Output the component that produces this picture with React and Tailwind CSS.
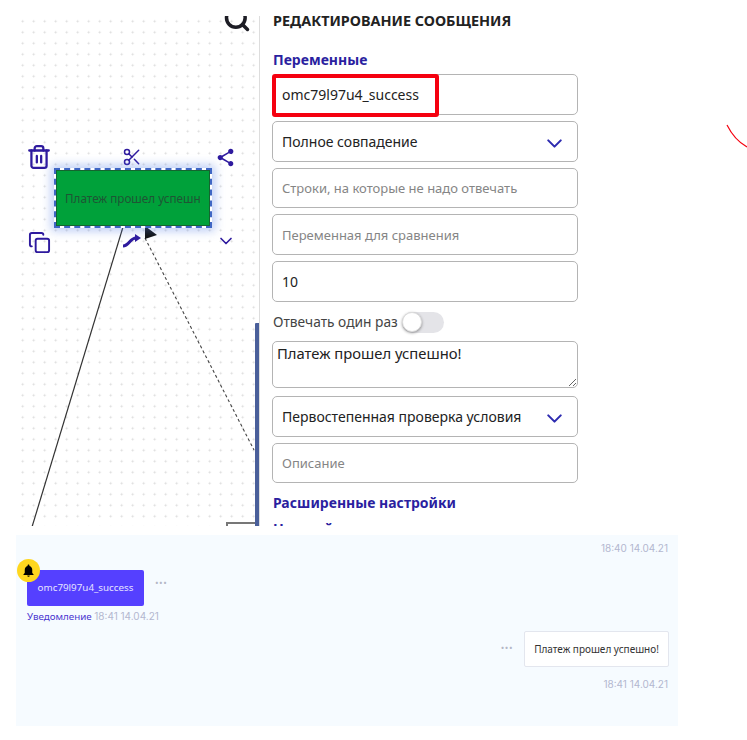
import { Trash2, Scissors, Copy, ChevronDown, Search } from "lucide-react";
import { MdShare, MdNotifications } from "react-icons/md";

const fieldClass =
  "w-full h-[40.75px] rounded-[5px] border border-[#b4b4b4] bg-white px-[9px] text-[14px] text-[#222] placeholder:text-[13px] placeholder:text-[#858585] outline-none";

function SelectField({ children }) {
  return (
    <div className={`${fieldClass} flex items-center justify-between`}>
      <span>{children}</span>
      <ChevronDown size={25} strokeWidth={2} className="mr-[1px] mt-[4px] text-[#2d2bb0]" />
    </div>
  );
}

function Canvas() {
  return (
    <div className="relative ml-4 mt-4 h-[510px] w-[244px] shrink-0 overflow-hidden border-r border-[#dddddd] bg-[radial-gradient(circle,#dadada_0.9px,transparent_1.1px)] bg-[size:11px_11px] bg-[position:1.2px_-0.2px]">
      <Search size={28} strokeWidth={3} className="absolute left-[207px] top-[-11px] text-[#1d1d25]" />

      {/* edges */}
      <svg className="absolute left-0 top-0" width="244" height="510" fill="none">
        <path d="M107 211 L16 511" stroke="#333" strokeWidth="1.2" />
        <path d="M129 222 L238 434" stroke="#444" strokeWidth="1.1" strokeDasharray="3 2.5" />
        <path d="M129 210 L141 219 L129 223 Z" fill="#111" />
      </svg>

      {/* node toolbar */}
      <Trash2 size={26} strokeWidth={2.1} className="absolute left-[10px] top-[128px] text-[#2e1a9e]" />
      <Scissors size={20} strokeWidth={1.8} className="absolute left-[106px] top-[131px] text-[#2e1a9e]" />
      <MdShare size={21} className="absolute left-[199px] top-[131px] text-[#2e1a9e]" />
      <Copy size={23} strokeWidth={2} className="absolute left-[12px] top-[215px] text-[#2e1a9e]" />
      <svg className="absolute left-[106px] top-[216px]" width="20" height="16" viewBox="0 0 20 16" fill="none">
        <path d="M1 14 C7 14 8 6 14 6" stroke="#2e1a9e" strokeWidth="3" />
        <path d="M13 2 L19 6 L13 10 Z" fill="#2e1a9e" />
      </svg>
      <ChevronDown size={20} strokeWidth={2} className="absolute left-[200px] top-[215px] text-[#2e1a9e]" />

      {/* node */}
      <div className="absolute left-[38px] top-[152px] h-[60px] w-[158px] border-2 border-dashed border-[#3f66c4] bg-white shadow-[0_0_9px_3px_rgba(90,130,230,0.4)]">
        <div className="flex h-full items-center overflow-hidden whitespace-nowrap border border-[#14652f] bg-[#00a13a] pl-[8px] pt-[2px] text-[11.7px] text-[#1f5535]">
          Платеж прошел успешн
        </div>
      </div>

      {/* neighbour nodes, cut off */}
      <div className="absolute left-[210px] top-[506px] h-[10px] w-[34px] border-2 border-[#777]" />
      <div className="absolute left-[238.5px] top-[307px] h-[203px] w-[5px] rounded-t-[1px] bg-[#4a5f9a]" />
    </div>
  );
}

function EditPanel() {
  return (
    <div className="relative ml-[12px] h-[526px] w-[306px] shrink-0 overflow-hidden pt-[12px] text-[#222]">
      <h2 className="ml-[1px] text-[14.4px] font-bold leading-[18px] text-[#222]">РЕДАКТИРОВАНИЕ СООБЩЕНИЯ</h2>
      <h3 className="ml-[1px] mt-[20px] text-[14px] font-bold leading-[20px] text-[#2b1fa0]">Переменные</h3>

      <div className="mt-[4px] flex flex-col gap-[6px]">
        <input className={fieldClass} readOnly value="omc79l97u4_success" />
        <SelectField>Полное совпадение</SelectField>
        <input className={fieldClass} readOnly placeholder="Строки, на которые не надо отвечать" />
        <input className={fieldClass} readOnly placeholder="Переменная для сравнения" />
        <input className={fieldClass} readOnly value="10" />
      </div>

      <div className="mt-[10px] flex h-[21px] items-center gap-[4px] text-[13.75px] text-[#444]">
        <span className="ml-[1px]">Отвечать один раз</span>
        <div className="flex h-[21px] w-[42px] items-center rounded-full bg-[#e4e4e8]">
          <div className="h-[20px] w-[20px] rounded-full border border-[#ddd] bg-white shadow-[0_1px_3px_rgba(0,0,0,0.4)]" />
        </div>
      </div>

      <textarea
        readOnly
        className="mt-[8px] block h-[47px] w-full rounded-[5px] border border-[#b4b4b4] px-[4px] py-0 text-[14.8px] leading-[22px] text-[#222] outline-none"
        value="Платеж прошел успешно!"
      />

      <div className="mt-[8px] flex flex-col gap-[6px]">
        <SelectField>Первостепенная проверка условия</SelectField>
        <input className={fieldClass} readOnly placeholder="Описание" />
      </div>

      <h3 className="ml-[1px] mt-[10px] text-[14px] font-bold leading-[20px] text-[#2b1fa0]">Расширенные настройки</h3>
      <h3 className="ml-[1px] mt-[6px] text-[14px] font-bold leading-[20px] text-[#2b1fa0]">Настройки кнопок</h3>

      {/* red marker from the annotated screenshot */}
      <div className="absolute left-0 top-[74px] h-[43px] w-[167px] rounded-[3px] border-[4px] border-[#f5000f]" />
    </div>
  );
}

function Chat() {
  const muted = "font-['Inter',sans-serif] text-[10px] text-[#b3b7cf]";
  const dots = "text-[9.5px] leading-[16px] tracking-[0.5px] text-[#b4b7c6]";
  return (
    <div className="ml-4 mt-[9px] h-[191px] w-[662px] bg-[#f6fbff] px-[9px] pt-[7px] text-[9.8px]">
      <p className={`pr-[1px] text-right leading-[12px] ${muted}`}>18:40 14.04.21</p>

      <div className="ml-[2px] mt-[16px] flex items-start">
        <div className="relative flex h-[36px] w-[117px] items-center justify-center rounded-[2px] bg-[#5540ff] pt-[1px] text-[#e6e3ff]">
          omc79l97u4_success
          <div className="absolute left-[-10px] top-[-11px] flex h-[23px] w-[23px] items-center justify-center rounded-full bg-[#ffd71f]">
            <MdNotifications size={15} className="text-black" />
          </div>
        </div>
        <span className={`ml-[11px] mt-[5px] ${dots}`}>•••</span>
      </div>
      <p className="ml-[2px] mt-[3px] leading-[14px]">
        <span className="text-[#4a35d0]">Уведомление</span>{" "}
        <span className={muted}>18:41 14.04.21</span>
      </p>

      <div className="mt-[7px] flex items-start justify-end">
        <span className={`mr-[11px] mt-[9px] ${dots}`}>•••</span>
        <div className="flex h-[36px] w-[145px] items-center justify-center rounded-[2px] border border-[#e3e6ee] bg-white text-[10px] text-[#333]">
          Платеж прошел успешно!
        </div>
      </div>
      <p className={`mt-[11px] pr-[1px] text-right leading-[12px] ${muted}`}>18:41 14.04.21</p>
    </div>
  );
}

export default function App() {
  return (
    <div className="relative h-[740px] w-[747px] overflow-hidden bg-white font-['Noto_Sans',sans-serif]">
      <div className="flex">
        <Canvas />
        <EditPanel />
      </div>
      <Chat />
      {/* stray marker stroke */}
      <svg className="absolute left-[725px] top-[120px]" width="22" height="30" fill="none">
        <path d="M2 5 C7 15 13 22 22 27" stroke="#f5000f" strokeWidth="1.2" />
      </svg>
    </div>
  );
}
